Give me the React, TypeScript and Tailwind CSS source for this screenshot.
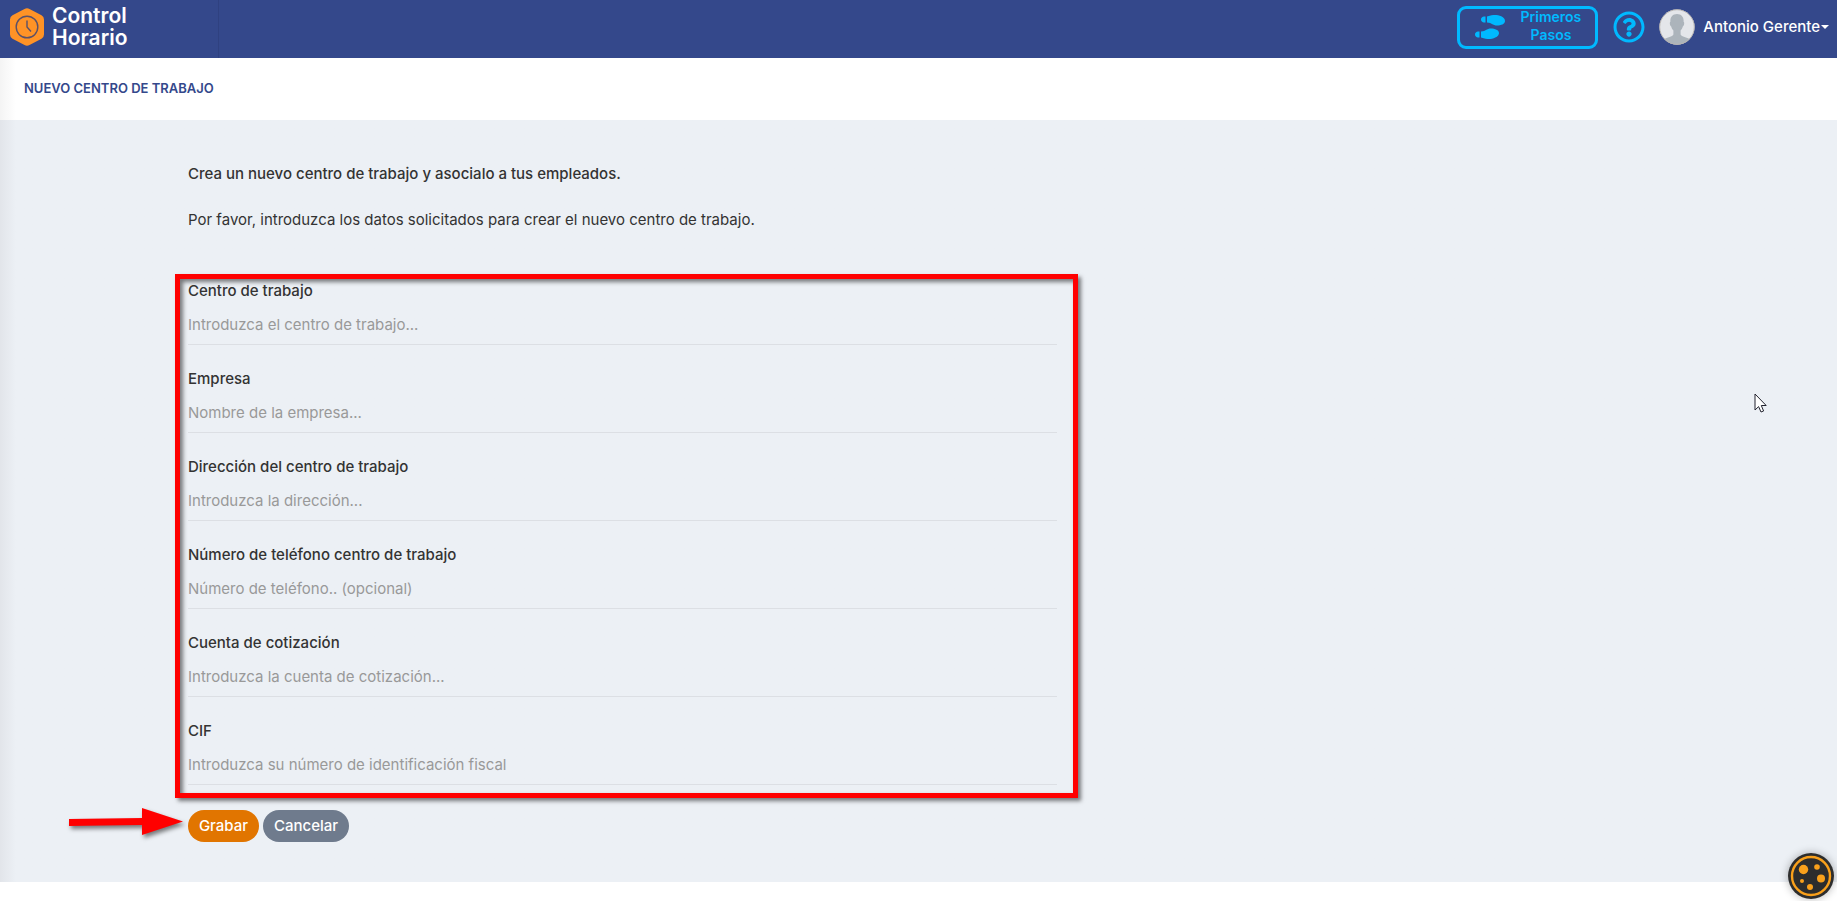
import { FaRegQuestionCircle, FaShoePrints } from 'react-icons/fa'

const fields = [
  { id: 'centro', label: 'Centro de trabajo', placeholder: 'Introduzca el centro de trabajo...' },
  { id: 'empresa', label: 'Empresa', placeholder: 'Nombre de la empresa...' },
  { id: 'direccion', label: 'Dirección del centro de trabajo', placeholder: 'Introduzca la dirección...' },
  { id: 'telefono', label: 'Número de teléfono centro de trabajo', placeholder: 'Número de teléfono.. (opcional)' },
  { id: 'cuenta', label: 'Cuenta de cotización', placeholder: 'Introduzca la cuenta de cotización...' },
  { id: 'cif', label: 'CIF', placeholder: 'Introduzca su número de identificación fiscal' },
]

function Header() {
  return (
    <header className="flex h-[58px] items-center justify-between bg-[#34488b]">
      {/* Logo */}
      <div className="flex h-full w-[219px] items-center border-r border-[#2f4180] pl-2.5">
        <a href="#" className="flex items-center gap-2 pb-1 text-white">
          <svg viewBox="0 0 34 38" className="h-[38px] w-[34px]" aria-hidden="true">
            <path
              d="M14.5 1 Q17 -.4 19.5 1 L31.5 7.2 Q34 8.6 34 11.4 V26.6 Q34 29.4 31.5 30.8 L19.5 37 Q17 38.4 14.5 37 L2.5 30.8 Q0 29.4 0 26.6 V11.4 Q0 8.6 2.5 7.2 Z"
              fill="#ff9326"
            />
            <g fill="none" stroke="#5b5068" strokeWidth="1.4">
              <circle cx="17" cy="19" r="10.8" />
              <path d="M17 12.5 V19 L21 23.5" />
            </g>
          </svg>
          <span className="text-[21px] leading-[22px] font-semibold">
            Control
            <br />
            Horario
          </span>
        </a>
      </div>

      {/* Acciones */}
      <div className="flex items-center pr-2 pb-1">
        <button className="flex h-[43px] w-[141px] items-center justify-between rounded-[9px] border-[3px] border-[#00b9ff] pr-[14px] pl-[15px] text-[#00b9ff]">
          <FaShoePrints className="h-6 w-[30px]" />
          <span className="pb-0.5 text-center text-sm leading-[18px] font-semibold">
            Primeros
            <br />
            Pasos
          </span>
        </button>
        <a href="#" aria-label="Ayuda" className="ml-[15px] text-[#00b9ff]">
          <FaRegQuestionCircle className="size-8" />
        </a>
        <svg viewBox="0 0 36 36" className="ml-[14px] size-9" aria-hidden="true">
          <circle cx="18" cy="18" r="17.5" fill="#e4e6ea" />
          <path
            d="M18 5 C22.5 5 25 8.2 24.6 12.8 C25.8 13.4 25 17 23.8 17.4 C23.4 19.3 22.4 20.6 21.6 21.5 V25.5 C22.5 28 28 28.2 30.8 30.2 A17.5 17.5 0 0 1 5.2 30.2 C8 28.2 13.5 28 14.4 25.5 V21.5 C13.6 20.6 12.6 19.3 12.2 17.4 C11 17 10.2 13.4 11.4 12.8 C11 8.2 13.5 5 18 5 Z"
            fill="#acb4bb"
          />
          <circle cx="18" cy="18" r="17.3" fill="none" stroke="#b9b5b2" strokeWidth="1" />
        </svg>
        <button className="ml-2 flex items-center gap-px text-[15px] font-medium text-white">
          Antonio Gerente
          <svg viewBox="0 0 8 4" className="h-1 w-2" aria-hidden="true">
            <path d="M0 0 H8 L4 4 Z" fill="currentColor" />
          </svg>
        </button>
      </div>
    </header>
  )
}

function Arrow() {
  return (
    <svg
      viewBox="0 0 122 36"
      className="absolute top-[-3px] right-full mr-[-1px] h-9 w-[122px] drop-shadow-[2px_3px_2px_rgba(0,0,0,0.5)]"
      aria-hidden="true"
    >
      <path d="M2 12 L75 11 V1 L116 14.500 L75 28 V18 L2 19 Z" fill="#ff0000" />
    </svg>
  )
}

function Cookie() {
  return (
    <button
      aria-label="Cookies"
      className="fixed right-[3px] bottom-[2px] size-[46px] rounded-full shadow-[0_0_8px_rgba(0,0,0,0.3)]"
    >
      <svg viewBox="0 0 46 46" className="size-full">
        <circle cx="23" cy="23" r="23" fill="#2d2d2d" />
        <circle cx="23" cy="23" r="19" fill="none" stroke="#f9a01b" strokeWidth="2.4" />
        <g fill="#f9a01b">
          <circle cx="15.500" cy="16.500" r="4.700" />
          <circle cx="29" cy="14" r="2.800" />
          <circle cx="33" cy="25.500" r="4" />
          <circle cx="14" cy="28" r="2" />
          <circle cx="22" cy="34" r="3" />
        </g>
      </svg>
    </button>
  )
}

function Cursor() {
  return (
    <svg viewBox="0 0 13 20" className="absolute top-[393px] right-[70px] h-5 w-[13px]" aria-hidden="true">
      <path d="M1 1 V17 L4.600 13.600 L7 19 L9.600 18 L7.300 12.500 H12.200 Z" fill="#fff" stroke="#22232f" />
    </svg>
  )
}

export default function App() {
  return (
    <div className="relative min-h-screen bg-white font-['Inter',sans-serif] text-[15px] text-[#333]">
      <Header />

      <div className="bg-linear-to-r from-[#f4f4f4] to-white to-[16px]">
        <h1 className="flex h-[62px] items-center pl-6 text-[13px] font-semibold text-[#34488b]">
          NUEVO CENTRO DE TRABAJO
        </h1>
      </div>

      <main className="bg-[#ecf0f5] bg-linear-to-r from-[#e2e5ea] to-[#ecf0f5] to-[16px] px-[175px] pt-11 pb-10">
        <div className="pl-[13px] leading-5">
          <p className="font-medium">Crea un nuevo centro de trabajo y asocialo a tus empleados.</p>
          <p className="mt-[26px]">
            Por favor, introduzca los datos solicitados para crear el nuevo centro de trabajo.
          </p>
        </div>

        <form onSubmit={(e) => e.preventDefault()}>
          <div className="mt-11 flex w-full max-w-[903px] flex-col gap-6 border-5 border-[#ff0000] pt-0.5 pr-4 pb-2 pl-2 shadow-[3px_3px_4px_rgba(0,0,0,0.5),inset_3px_3px_4px_rgba(0,0,0,0.5)]">
            {fields.map((field) => (
              <div key={field.id}>
                <label htmlFor={field.id} className="block leading-5 font-medium">
                  {field.label}
                </label>
                <input
                  id={field.id}
                  type="text"
                  placeholder={field.placeholder}
                  className="block h-11 w-full border-b border-[#dcdfe4] bg-transparent pt-1 outline-none placeholder:text-[#999]"
                />
              </div>
            ))}
          </div>

          <div className="relative mt-3 ml-[13px] flex w-fit gap-1 font-medium text-white">
            <Arrow />
            <button type="submit" className="h-8 w-[71px] rounded-full bg-[#e17500]">
              Grabar
            </button>
            <button type="button" className="h-8 w-[86px] rounded-full bg-[#6f7b8d]">
              Cancelar
            </button>
          </div>
        </form>
      </main>

      <Cursor />
      <Cookie />
    </div>
  )
}
